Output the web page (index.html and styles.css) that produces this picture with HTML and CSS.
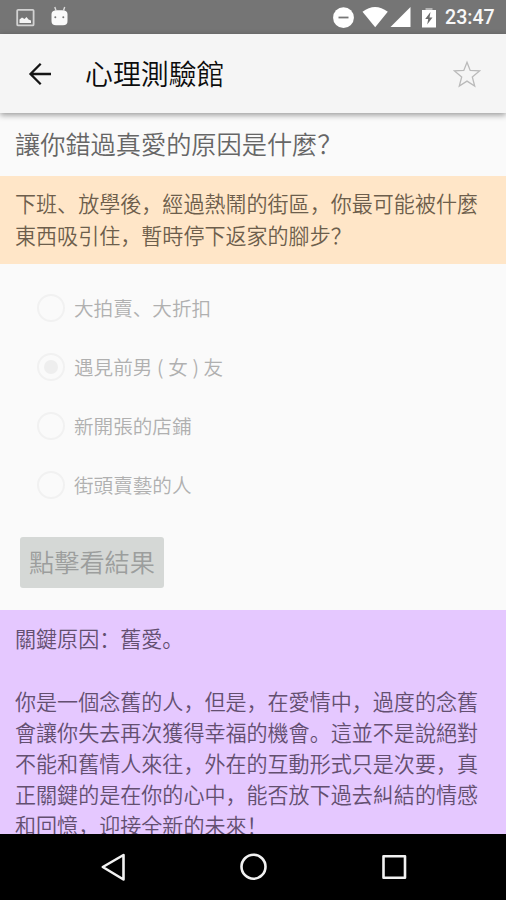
FILE: index.html
```html
<!DOCTYPE html>
<html lang="zh-Hans">
<head>
<meta charset="utf-8">
<title>心理測驗館</title>
<link rel="stylesheet" href="styles.css">
</head>
<body>
<div class="screen">
  <div class="status">
    <svg class="status-left" width="80" height="34" viewBox="0 0 80 34">
      <rect x="17.2" y="9.800" width="16.400" height="15.600" rx="1" fill="none" stroke="#d2d2d2" stroke-width="1.800"/>
      <path d="M19.500 23v-3.500l2.500-2 2.500 1.500 2-2 2 2.500 2.500 1V23z" fill="#f4f4f4"/>
      <path d="M54.800 7l1.200 3.500M64.700 7l-1.200 3.500" stroke="#dcdcdc" stroke-width="1.400"/>
      <path d="M51.500 14q0-3.800 5.500-3.800h5q5.500 0 5.500 3.800v7q0 4.300-4.500 4.300h-7q-4.500 0-4.500-4.300z" fill="#fafafa"/>
      <circle cx="55.300" cy="17.200" r="1" fill="#777"/><circle cx="63.300" cy="17.200" r="1" fill="#777"/>
    </svg>
    <svg class="status-right" width="110" height="34" viewBox="330 0 110 34" fill="#fff">
      <circle cx="343.500" cy="17.700" r="10.400"/>
      <path d="M338.500 17.500h10" stroke="#777" stroke-width="1.800"/>
      <path d="M362.500 11.800q12.500-9.600 25.300 0L375.200 27.300z"/>
      <path d="M410.500 7v20h-20z"/>
      <path d="M425.500 8h7v2.500h-7z" fill="#b5b5b5"/>
      <path d="M422 10h14v17.500h-14z"/>
      <path d="M430.500 12l-5.300 7h3l-1 5.500 5.300-7h-3z" fill="#6c6c6c"/>
    </svg>
    <span class="clock">23:47</span>
  </div>
  <header class="toolbar">
    <svg width="24" height="24" viewBox="0 0 24 24" fill="none" stroke="#151515" stroke-width="2.300"><path d="M12.700 1.800L2.500 12l10.200 10.200M2.500 12H23"/></svg>
    <h1>心理測驗館</h1>
    <svg class="star" width="28" height="28" viewBox="0 0 28 28" fill="none" stroke="#bababa" stroke-width="1.300"><path d="M14 2.200l3.200 8.200 9.300.5-7.200 6 2.400 9.200L14 21.100l-7.700 5 2.400-9.200-7.200-6 9.300-.5z"/></svg>
  </header>
  <main class="content">
    <h2>讓你錯過真愛的原因是什麼？</h2>
    <p class="question">下班、放學後，經過熱鬧的街區，你最可能被什麼<br>東西吸引住，暫時停下返家的腳步？</p>
    <div class="options">
      <div class="option"><i class="radio"></i>大拍賣、大折扣</div>
      <div class="option"><i class="radio checked"></i><span class="spaced">遇見前男 ( 女 ) 友</span></div>
      <div class="option"><i class="radio"></i>新開張的店鋪</div>
      <div class="option"><i class="radio"></i>街頭賣藝的人</div>
    </div>
    <button class="submit" disabled>點擊看結果</button>
    <section class="result">
      <p class="reason">關鍵原因：舊愛。</p>
      <p>你是一個念舊的人，但是，在愛情中，過度的念舊<br>會讓你失去再次獲得幸福的機會。這並不是說絕對<br>不能和舊情人來往，外在的互動形式只是次要，真<br>正關鍵的是在你的心中，能否放下過去糾結的情感<br>和回憶，迎接全新的未來！</p>
    </section>
  </main>
  <nav class="navbar">
    <svg width="506" height="66" viewBox="0 0 506 66" fill="none" stroke="#f2f2f2" stroke-width="2.600" stroke-linejoin="round">
      <path d="M123.500 21v24.500L102.800 33z"/>
      <circle cx="253.500" cy="32.700" r="12"/>
      <rect x="383.500" y="22.300" width="21.500" height="21.500"/>
    </svg>
  </nav>
</div>
</body>
</html>
```
FILE: styles.css
```css
* { box-sizing: border-box; margin: 0; padding: 0; }
body { font-family: "Noto Sans CJK SC", sans-serif; font-weight: 350; background: #fafafa; overflow: hidden; }
.screen { width: 506px; height: 900px; display: flex; flex-direction: column; background: #fafafa; overflow: hidden; }
.status { height: 34px; flex: none; background: #757575; display: flex; }
.status svg { display: block; }
.status-right { margin-left: 250px; }
.clock { margin-left: 5px; font: 500 19.6px/36px Roboto, sans-serif; color: #f8f8f8; }
.toolbar { height: 79px; flex: none; background: #f5f5f5; display: flex; align-items: center; padding: 0 25px 0 28px; box-shadow: 0 2px 6px rgba(0,0,0,.4); z-index: 1; }
.toolbar h1 { margin: -2px 0 0 33px; font-size: 27.9px; line-height: 40px; font-weight: 350; color: #0c0c0c; }
.star { margin-left: auto; }
.content { flex: 1; min-height: 0; overflow: hidden; }
h2 { height: 63px; padding: 12px 15px 0; font-size: 25.2px; line-height: 36px; font-weight: 350; color: #666; white-space: nowrap; }
.question { height: 88px; padding: 11px 15px; background: #ffe6c8; font-size: 21.05px; line-height: 32px; color: #6d5e4c; white-space: nowrap; }
.options { padding-top: 14px; height: 273px; }
.option { height: 59px; display: flex; align-items: center; padding-left: 37px; gap: 9px; font-size: 19.6px; color: #b0b0b0; white-space: pre; }
.spaced { word-spacing: .3px; }
.radio { width: 28px; height: 28px; border: 2px solid #f1f1f1; border-radius: 50%; display: grid; place-items: center; }
.checked::after { content: ""; width: 14px; height: 14px; border-radius: 50%; background: #eee; }
.submit { display: block; margin-left: 20px; width: 144px; height: 51px; border: 0; border-radius: 3px; background: #d5d8d6; color: #9c9e9d; font: 350 25.2px/48px "Noto Sans CJK SC", sans-serif; padding-bottom: 3px; }
.result { margin-top: 22px; height: 230px; padding: 13px 15px; background: #e5c8ff; color: #634f70; font-size: 21.05px; line-height: 30.9px; white-space: nowrap; }
.reason { margin-bottom: 32px; }
.navbar { height: 66px; flex: none; background: #000; }
.navbar svg { display: block; }
```
